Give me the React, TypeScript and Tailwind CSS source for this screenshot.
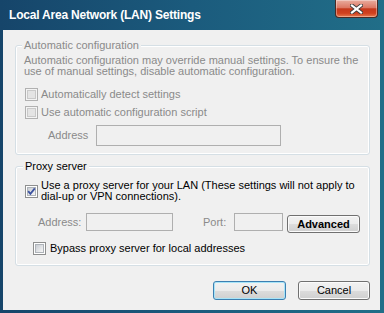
import React from "react";

const CheckBox = ({ checked = false, disabled = false }: { checked?: boolean; disabled?: boolean }) => {
    return (
        <span
            className={`relative flex h-[13px] w-[13px] shrink-0 items-center justify-center border ${
                disabled ? "border-[#b1b1b1] bg-[#f4f4f4]" : "border-[#8e8f8f] bg-white"
            }`}
        >
            <span
                className={`h-[9px] w-[9px] border ${
                    disabled
                        ? "border-[#c9c9c9] bg-[#e4e4e4]"
                        : "border-[#aeb3b9] bg-gradient-to-br from-[#c9cdd3] to-[#f7f7f7]"
                }`}
            />
            {checked && (
                <svg className="absolute left-0 top-0" width="11" height="11" viewBox="0 0 11 11">
                    <path d="M2.2 5.2 L4.4 7.8 L8.8 2.4" fill="none" stroke="#3c52a0" strokeWidth="1.8" />
                </svg>
            )}
        </span>
    );
};

const TextBox = ({ className }: { className: string }) => (
    <div className={`border border-[#afafaf] ${className}`} />
);

const Button = ({ label, primary = false, bold = false, className }: { label: string; primary?: boolean; bold?: boolean; className: string }) => (
    <div
        className={`flex items-center justify-center rounded-[3px] border bg-[linear-gradient(180deg,#f2f2f2_0%,#ebebeb_50%,#dddddd_50%,#cfcfcf_100%)] ${
            primary
                ? "border-[#3c7fb1] shadow-[inset_0_0_0_1px_#a7e4f8]"
                : "border-[#707070] shadow-[inset_0_0_0_1px_#fbfbfb]"
        } ${bold ? "font-bold" : ""} ${className}`}
    >
        {label}
    </div>
);

const CloseButton = () => (
    <div className="mr-[6px] flex h-[18px] w-[43px] items-center justify-center rounded-b-[4px] border border-t-0 border-[#4b2a24] bg-[linear-gradient(180deg,#e9ad9f_0%,#dc7864_45%,#c5391c_52%,#d0411f_78%,#e67a4f_100%)] shadow-[inset_0_0_0_1px_rgba(255,255,255,0.35)]">
        <svg width="13" height="10" viewBox="0 0 13 10">
            <path d="M2 1.5 L11 8.5 M11 1.5 L2 8.5" stroke="#3d3d3d" strokeWidth="4" strokeLinecap="square" />
            <path d="M2 1.5 L11 8.5 M11 1.5 L2 8.5" stroke="#ffffff" strokeWidth="2.2" strokeLinecap="square" />
        </svg>
    </div>
);

export default function App() {
    return (
        <div className="flex h-[313px] w-[384px] flex-col bg-[linear-gradient(90deg,#16456a_0%,#1b5b7d_50%,#216e88_100%)] font-['Liberation_Sans',Arial,sans-serif] text-[11px] leading-[13px] text-black">
            <div className="flex h-[30px] shrink-0 items-start justify-between">
                <div className="pl-[9px] pt-[8px] text-[12px] font-bold leading-[14px] tracking-[-0.2px] text-white">
                    Local Area Network (LAN) Settings
                </div>
                <CloseButton />
            </div>

            <div className="mb-[3px] ml-[3px] mr-[4px] flex flex-1 flex-col bg-[#f0f0f0] pl-[12px] pt-[9px]">
                <fieldset className="w-[355px] rounded-[3px] border border-[#d5dfe5] pb-[8px] pl-[8px] shadow-[inset_0_0_0_1px_#ffffff]">
                    <legend className="ml-[-2px] bg-[#f0f0f0] px-[2px] leading-[13px] text-[#8a8a8a]">
                        Automatic configuration
                    </legend>
                    <div className="mt-[3px] leading-[11px] text-[#8a8a8a]">
                        <div>Automatic configuration may override manual settings. To ensure the</div>
                        <div>use of manual settings, disable automatic configuration.</div>
                    </div>
                    <div className="ml-[1px] mt-[11px] flex h-[13px] items-center text-[#8a8a8a]">
                        <CheckBox disabled />
                        <span className="ml-[3px]">Automatically detect settings</span>
                    </div>
                    <div className="ml-[1px] mt-[5px] flex h-[13px] items-center text-[#8a8a8a]">
                        <CheckBox disabled />
                        <span className="ml-[3px]">Use automatic configuration script</span>
                    </div>
                    <div className="mt-[6px] flex h-[21px] items-center">
                        <span className="ml-[24px] w-[48px] text-[#8a8a8a]">Address</span>
                        <TextBox className="h-[21px] w-[185px]" />
                    </div>
                </fieldset>

                <fieldset className="mt-[5px] w-[355px] rounded-[3px] border border-[#d5dfe5] pb-[10px] pl-[8px] shadow-[inset_0_0_0_1px_#ffffff]">
                    <legend className="ml-[-1px] bg-[#f0f0f0] px-[2px] leading-[13px]">Proxy server</legend>
                    <div className="ml-[1px] mt-[7px] flex items-center">
                        <CheckBox checked />
                        <div className="ml-[3px] leading-[11px]">
                            <div>Use a proxy server for your LAN (These settings will not apply to</div>
                            <div>dial-up or VPN connections).</div>
                        </div>
                    </div>
                    <div className="mt-[11px] flex h-[18px] items-start">
                        <span className="ml-[14px] w-[48px] self-center text-[#8a8a8a]">Address:</span>
                        <TextBox className="h-[18px] w-[87px]" />
                        <span className="ml-[30px] w-[31px] self-center text-[#8a8a8a]">Port:</span>
                        <TextBox className="h-[18px] w-[49px]" />
                        <Button label="Advanced" bold className="ml-[4px] mt-[2px] h-[18px] w-[73px]" />
                    </div>
                    <div className="ml-[9px] mt-[11px] flex h-[13px] items-center">
                        <CheckBox />
                        <span className="ml-[4px]">Bypass proxy server for local addresses</span>
                    </div>
                </fieldset>

                <div className="mt-[15px] flex w-[355px] justify-end gap-[12px]">
                    <Button label="OK" primary className="h-[19px] w-[73px]" />
                    <Button label="Cancel" className="h-[19px] w-[72px]" />
                </div>
            </div>
        </div>
    );
}
